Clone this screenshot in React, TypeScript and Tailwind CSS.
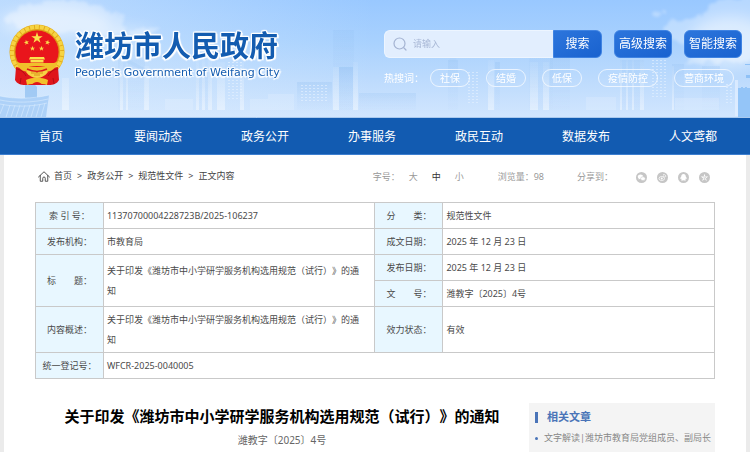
import * as React from 'react';

const NAV = ['首页', '要闻动态', '政务公开', '办事服务', '政民互动', '数据发布', '人文鸢都'];
const HOT_WORDS = ['社保', '结婚', '低保', '疫情防控', '营商环境'];
const CRUMBS = ['首页', '政务公开', '规范性文件', '正文内容'];
const TITLE = '关于印发《潍坊市中小学研学服务机构选用规范（试行）》的通知';

// x, top, width, opacity
const TOWERS: number[][] = [
    [118, 60, 27, 0.15], [196, 70, 14, 0.15], [333, 30, 21, 0.2], [339, 67, 14, 0.45],
    [297, 82, 35, 0.3], [359, 93, 57, 0.25], [448, 60, 10, 0.25], [495, 62, 5, 0.3],
    [529, 42, 24, 0.2], [550, 55, 20, 0.25], [620, 60, 24, 0.2], [672, 64, 12, 0.2], [702, 66, 18, 0.2],
];

// x, top, columns, rows
const WINDOWS: number[][] = [
    [228, 62, 4, 13], [301, 85, 7, 6], [468, 72, 3, 11], [652, 60, 4, 13], [726, 84, 2, 7],
];

const Skyline: React.FC = () => (
    <svg className="absolute inset-0 h-full w-full" viewBox="0 0 750 118" preserveAspectRatio="none" aria-hidden="true">
        <defs>
            <linearGradient id="sky" x1="0" y1="0" x2="0" y2="1">
                <stop offset="0" stopColor="#99c8ff" />
                <stop offset="0.35" stopColor="#a8d1fe" />
                <stop offset="0.65" stopColor="#bbdafd" />
                <stop offset="1" stopColor="#d2e6fe" />
            </linearGradient>
            <linearGradient id="haze" x1="0" y1="0" x2="1" y2="0">
                <stop offset="0" stopColor="#e0effe" stopOpacity="0.5" />
                <stop offset="0.5" stopColor="#e0effe" stopOpacity="0" />
            </linearGradient>
            <linearGradient id="tower" x1="0" y1="0" x2="0" y2="1">
                <stop offset="0" stopColor="#8fbdf0" stopOpacity="0.9" />
                <stop offset="1" stopColor="#b4d5fa" stopOpacity="0.2" />
            </linearGradient>
            <linearGradient id="beam" x1="0" y1="0" x2="0" y2="1">
                <stop offset="0" stopColor="#fff" stopOpacity="0.05" />
                <stop offset="1" stopColor="#fff" stopOpacity="0.4" />
            </linearGradient>
            <filter id="cloud" x="-20%" y="-30%" width="140%" height="160%">
                <feTurbulence type="fractalNoise" baseFrequency="0.09" numOctaves="4" seed="7" result="n" />
                <feDisplacementMap in="SourceGraphic" in2="n" scale="12" xChannelSelector="R" yChannelSelector="G" />
                <feGaussianBlur stdDeviation="1.4" />
            </filter>
            <filter id="soft" x="-30%" y="-50%" width="160%" height="200%">
                <feGaussianBlur stdDeviation="7" />
            </filter>
        </defs>
        <rect width="750" height="118" fill="url(#sky)" />
        <rect width="750" height="118" fill="url(#haze)" />
        <g fill="#fff" filter="url(#soft)">
            <ellipse cx="55" cy="22" rx="55" ry="16" opacity="0.4" />
            <ellipse cx="120" cy="34" rx="35" ry="8" opacity="0.3" />
            <ellipse cx="730" cy="42" rx="40" ry="26" opacity="0.45" />
        </g>
        <g fill="#fff" filter="url(#cloud)" opacity="0.3">
            <path d="M6 18c6-8 18-12 30-14 16-5 40-4 56 2 14 3 28 8 32 16 6 6 2 12-8 12-18 2-40-2-60-2-22-1-42-4-50-14z" />
            <path d="M125 34c10-4 24-6 34-9-4 6-12 12-24 13zM118 14l8 1-4 4z" />
            <path d="M664 32c2-8 12-10 20-13 8-2 18-2 24-9 6-8 14-12 26-12h24v62h-30c-16 2-30 6-44 3 2-8 12-10 22-14-16-4-32-6-42-17z" />
            <path d="M651 13l6-2 1 5-5 1zM661 8l4 2v5l-4-1z" />
        </g>
        {TOWERS.map(([x, y, w, o]) => (
            <rect key={x} x={x} y={y} width={w} height={110 - y} fill="url(#tower)" opacity={o} />
        ))}
        <g fill="url(#beam)">
            <path d="M62 78h7v32h-7zM120 60h3v50h-3zM126 60h2v50h-2zM144 66h5v44h-5zM196 58h3v52h-3zM202 58h3v52h-3zM208 58h4v52h-4zM217 62h8v48h-8zM240 62h4v48h-4z" />
            <path d="M333 67h6v43h-6zM353 62h5v48h-5zM488 60h6v50h-6zM530 62h8v48h-8zM543 62h6v48h-6zM620 60h2v50h-2zM626 60h2v50h-2zM632 60h2v50h-2zM640 60h4v50h-4zM672 66h2v44h-2z" />
        </g>
        <g fill="#fff" opacity="0.15">
            <path d="M165 99h28v11h-28zM250 99h20v11h-20zM268 94h26v16h-26zM586 97h30v13h-30zM675 98h44v12h-44z" />
        </g>
        <path d="M449 62l3-11h2l3 11zM117 58l5-2 26 14-4 1z" fill="#a9cdf5" opacity="0.35" />
        <g fill="#e7f2ff" opacity="0.6">
            {WINDOWS.map(([x, y, cols, rows]) =>
                Array.from({ length: cols * rows }, (_, i) => (
                    <rect key={`${x}-${i}`} x={x + (i % cols) * 4} y={y + Math.floor(i / cols) * 3} width="2" height="1" />
                ))
            )}
        </g>
        {/* stadium on the left edge */}
        <path d="M25 83h8l4 4v11H25z" fill="#8dbdef" opacity="0.7" />
        <path d="M0 96c14 3 32 3 49-1l-3 22H0z" fill="#9cc8f5" opacity="0.7" />
        <g stroke="#e3f1ff" strokeWidth="0.7" opacity="0.7" fill="none">
            <path d="M0 96c14 3 32 3 49-1M0 100c14 3 32 3 48-1M0 104c14 3 32 3 47-1" />
            <path d="M4 104l-4 10M10 105l-4 12M15 105l-4 12M20 105l-4 12M25 105l-4 12M30 105l-4 12M35 104l-4 13M40 104l-4 13M45 103l-4 14" />
        </g>
        <path d="M735 80h3v36h-3z" fill="#e4f0ff" opacity="0.7" />
        <path d="M738 88h3v-1h2v1h2v-1h2v1h3v29h-12z" fill="#94c5f8" />
        <path d="M745 64h5v1h-5zM746 75h4v3h-4z" fill="#8fc1f6" />
        <path d="M0 117.500h750" stroke="#a9c9ee" />
    </svg>
);

const STAR = 'M0-1 .225-.309.951-.309.363.118.588.809 0 .382-.588.809-.363.118-.951-.309-.225-.309z';

const Emblem: React.FC = () => (
    <svg className="h-[62px] w-14 shrink-0" viewBox="0 0 56 62" role="img" aria-label="国徽">
        <circle cx="28" cy="28" r="27.500" fill="#e3ab1c" />
        <circle cx="28" cy="28" r="25" fill="none" stroke="#f6d443" strokeWidth="4" strokeDasharray="4 1" />
        <circle cx="28" cy="28" r="22" fill="#e9151c" stroke="#d99a12" strokeWidth="0.800" />
        <g fill="#fbe04c">
            <path d={STAR} transform="translate(28 14) scale(6)" />
            <path d={STAR} transform="translate(17.500 18.500) rotate(-15) scale(2.800)" />
            <path d={STAR} transform="translate(38.500 18.500) rotate(15) scale(2.800)" />
            <path d={STAR} transform="translate(23.500 24.500) scale(2.800)" />
            <path d={STAR} transform="translate(32.500 24.500) scale(2.800)" />
            <path d="M21 33h14l1 2.500H20zM21.500 36h13v2.500h-13z" />
            <path d="M11 39h34v3H11z" fill="#f0c02c" />
        </g>
        <path d="M7 43c7 2 35 2 42 0l1 13c-2 4-6 5-10 5H16c-4 0-8-1-10-5z" fill="#df151b" />
        <path d="M8 38c5 1 9 5 20 5s15-4 20-5c0 6-6 10-12 10H20c-6 0-12-4-12-10z" fill="#f0bf2a" />
        <path d="M17 48c3-3 7-3 11 1 4-4 8-4 11-1-3 4-7 6-11 6s-8-2-11-6z" fill="#f7d245" />
        <path d="M18 45c6 3 14 3 20 0" stroke="#dd1a1a" strokeWidth="1.500" fill="none" />
        <path d="M22 49h12M25 51h6" stroke="#d8941a" fill="none" />
        <path d="M17 56c6-3 16-3 22 0l-1 5c-6-2-14-2-20 0z" fill="#f2c22b" />
        <path d="M23 61c2-4 8-4 10 0z" fill="#df151b" />
        <path d="M7 45c4 0 8 3 10 7M49 45c-4 0-8 3-10 7M12 54l-1 6M44 54l1 6" stroke="#b20e15" fill="none" />
    </svg>
);

const ShareButton: React.FC<{ label: string; children: React.ReactNode }> = ({ label, children }) => (
    <button type="button" aria-label={label} className="size-[11px]">
        <svg viewBox="0 0 22 22" className="block size-full">
            <circle cx="11" cy="11" r="11" fill="#c6c6c6" />
            {children}
        </svg>
    </button>
);

const Header: React.FC = () => (
    <header className="relative h-[118px]">
        <Skyline />
        <div className="relative flex items-start justify-between pl-[9px] pr-2">
            <a href="#" className="mt-6 flex gap-[10px]">
                <Emblem />
                <div className="text-[#135cb0] [text-shadow:1px_0_1px_#fff,-1px_0_1px_#fff,0_1px_1px_#fff,0_-1px_1px_#fff,2px_1px_1px_#fff,-1px_-1px_1px_#fff,1px_-1px_1px_#fff,-1px_2px_1px_#fff]">
                    <div className="pt-1 text-[29px] leading-9 font-bold whitespace-nowrap">潍坊市人民政府</div>
                    <div className="text-[11px] leading-[18px] whitespace-nowrap font-['DejaVu_Sans',sans-serif]">People's Government of Weifang City</div>
                </div>
            </a>
            <div className="mt-[30px] w-[358px]">
                <form className="flex gap-3" onSubmit={(e) => e.preventDefault()}>
                    <div className="flex h-7 flex-1">
                        <label className="flex min-w-0 flex-1 items-center gap-[6px] rounded-l-md border border-r-0 border-[#edf5ff] bg-[#e2eefe] pl-2">
                            <svg viewBox="0 0 14 14" className="size-[14px] shrink-0" fill="none" stroke="#a4b3d2" strokeWidth="1.200" strokeLinecap="round">
                                <circle cx="6.500" cy="6.500" r="5.500" />
                                <path d="M11 11l2 2" />
                            </svg>
                            <input type="text" aria-label="搜索" placeholder="请输入" className="w-full min-w-0 text-[9px] outline-none placeholder:text-[#a9b8d6]" />
                        </label>
                        <button type="submit" className="w-[49px] rounded-r-md border border-[#3f83e2] bg-linear-to-br from-[#2c75dc] to-[#1962cf] text-xs text-white">搜索</button>
                    </div>
                    {['高级搜索', '智能搜索'].map((text) => (
                        <button key={text} type="button" className="w-[58px] rounded-md border border-[#3f83e2] bg-linear-to-br from-[#2c75dc] to-[#1962cf] text-xs whitespace-nowrap text-white">{text}</button>
                    ))}
                </form>
                <div className="mt-[11px] flex items-center text-[10px] text-white">
                    <span className="mr-[6px]">热搜词：</span>
                    <div className="flex gap-4">
                        {HOT_WORDS.map((word) => (
                            <a key={word} href="#" className="flex h-[18px] items-center rounded-full border border-white/70 px-[9px]">{word}</a>
                        ))}
                    </div>
                </div>
            </div>
        </div>
    </header>
);

const Label: React.FC<{ rowSpan?: number; children: React.ReactNode }> = ({ rowSpan, children }) => (
    <th scope="row" rowSpan={rowSpan} className="border border-[#c9c9c9] bg-[#e8f7ff] text-center font-normal whitespace-pre">{children}</th>
);

const Value: React.FC<{ rowSpan?: number; colSpan?: number; children: React.ReactNode }> = ({ rowSpan, colSpan, children }) => (
    <td rowSpan={rowSpan} colSpan={colSpan} className="border border-[#c9c9c9] pr-3 pl-[3px]">{children}</td>
);

const InfoTable: React.FC = () => (
    <table className="w-full table-fixed border-collapse text-[9px] leading-5 text-[#4a4a4a]">
        <colgroup>
            <col className="w-[10%]" />
            <col className="w-[40%]" />
            <col className="w-[10%]" />
            <col className="w-[40%]" />
        </colgroup>
        <tbody>
            <tr className="h-[26px]">
                <Label>索 引 号：</Label>
                <Value>11370700004228723B/2025-106237</Value>
                <Label>分　　类：</Label>
                <Value>规范性文件</Value>
            </tr>
            <tr className="h-[26px]">
                <Label>发布机构：</Label>
                <Value>市教育局</Value>
                <Label>成文日期：</Label>
                <Value>2025 年 12 月 23 日</Value>
            </tr>
            <tr className="h-[26px]">
                <Label rowSpan={2}>标　　题：</Label>
                <Value rowSpan={2}>{TITLE}</Value>
                <Label>发布日期：</Label>
                <Value>2025 年 12 月 23 日</Value>
            </tr>
            <tr className="h-[26px]">
                <Label>文　　号：</Label>
                <Value>潍教字〔2025〕4号</Value>
            </tr>
            <tr className="h-[46px]">
                <Label>内容概述：</Label>
                <Value>{TITLE}</Value>
                <Label>效力状态：</Label>
                <Value>有效</Value>
            </tr>
            <tr className="h-[26px]">
                <Label>统一登记号：</Label>
                <Value colSpan={3}>WFCR-2025-0040005</Value>
            </tr>
        </tbody>
    </table>
);

const App: React.FC = () => (
    <div className="flex min-h-screen flex-col bg-[#ebebeb] font-['Noto_Sans','Noto_Sans_CJK_SC',sans-serif] [text-spacing-trim:space-all]">
        <Header />
        <nav className="flex h-[37px] items-center justify-between border-b border-[#3d7fd0] bg-[#125bb1] pt-[2px] pr-[33px] pl-[27px] text-xs text-white">
            {NAV.map((item) => (
                <a key={item} href="#" className="w-12 text-center whitespace-nowrap">{item}</a>
            ))}
        </nav>
        <main className="mx-1 flex flex-1 flex-col bg-white px-[31px]">
            <div className="flex h-[47px] items-start justify-between pt-[13px] text-[9px] leading-4">
                <div className="flex items-center pl-[3px] text-[#444]">
                    <svg viewBox="0 0 24 22" className="mr-1 h-[11px] w-3" fill="none" stroke="#444" strokeWidth="1.800" strokeLinejoin="round" strokeLinecap="round">
                        <path d="M1 12L12 1.500 23 12M4.500 9v11.500H9.500V14.500a2.500 2.500 0 0 1 5 0v6h5V9" />
                    </svg>
                    {CRUMBS.map((crumb, i) => (
                        <React.Fragment key={crumb}>
                            {i > 0 && <span className="mx-[5px]">&gt;</span>}
                            <a href="#">{crumb}</a>
                        </React.Fragment>
                    ))}
                </div>
                <div className="flex items-center pt-px pr-[5px] text-[#999]">
                    <span className="mr-[9px]">字号：</span>
                    <div className="mr-[34px] flex gap-[14px]">
                        <button type="button">大</button>
                        <button type="button" className="text-[#333]">中</button>
                        <button type="button">小</button>
                    </div>
                    <span className="mr-[33px]">浏览量：98</span>
                    <span className="mr-[23px]">分享到：</span>
                    <div className="flex gap-[10px]">
                        <ShareButton label="微信">
                            <g fill="#fff">
                                <path d="M9 5c-3.300 0-5.500 2-5.500 4.500 0 1.500.8 2.700 2 3.500L5 15l2.300-1.200 1.700.2c3 0 5.500-2 5.500-4.500S12 5 9 5z" />
                                <path d="M14 9.500c-2.800 0-4.800 1.700-4.800 3.800s2 3.700 4.800 3.700l1.400-.2 2 1-.5-1.700c1-.7 1.700-1.700 1.700-2.800 0-2.100-2-3.800-4.600-3.800z" stroke="#c6c6c6" strokeWidth="1.200" />
                            </g>
                        </ShareButton>
                        <ShareButton label="微博">
                            <ellipse cx="9.500" cy="13" rx="5.500" ry="4" fill="none" stroke="#fff" strokeWidth="1.500" />
                            <circle cx="9.500" cy="13" r="2" fill="#fff" />
                            <path d="M13 5c3-.5 5 1.500 4.500 4.500M12.500 8c1.500-.3 2.300.5 2 2" fill="none" stroke="#fff" strokeWidth="1.400" strokeLinecap="round" />
                        </ShareButton>
                        <ShareButton label="QQ">
                            <path d="M11 4c-3 0-4.500 2.200-4.500 4.800-1 1.500-2.500 3.200-2 5.200l2-1 .5 2.500-1 1c1 1 3.500.8 5 0 1.500.8 4 1 5 0l-1-1 .5-2.500 2 1c.5-2-1-3.700-2-5.200C15.500 6.200 14 4 11 4z" fill="#fff" />
                        </ShareButton>
                        <ShareButton label="QQ空间">
                            <path d={STAR} transform="translate(11 11.500) scale(8)" fill="#fff" />
                            <path d="M8.500 10h5l-4 4h4" fill="none" stroke="#c6c6c6" strokeWidth="1.400" />
                        </ShareButton>
                    </div>
                </div>
            </div>
            <InfoTable />
            <div className="flex flex-1">
                <article className="flex-1 pt-[25px] text-center">
                    <h1 className="text-[15px] leading-6 font-bold whitespace-nowrap text-black">{TITLE}</h1>
                    <p className="mt-1 text-[10px] leading-4 text-[#666]">潍教字〔2025〕4号</p>
                </article>
                <aside className="mt-6 w-[186px] bg-[#f4f4f4] px-[6px] pt-[5px]">
                    <h2 className="flex items-center gap-[9px] text-[11px] leading-[18px] font-bold text-[#4a74b8]">
                        <span className="h-[11px] w-[3px] bg-[#4a74b8]" />
                        相关文章
                    </h2>
                    <ul className="mt-1 text-[9px] leading-4 text-[#888]">
                        <li className="flex items-center gap-[6px]">
                            <span className="size-[3px] shrink-0 rounded-full bg-[#4a74b8]" />
                            <a href="#" className="whitespace-nowrap">文字解读|潍坊市教育局党组成员、副局长</a>
                        </li>
                    </ul>
                </aside>
            </div>
        </main>
    </div>
);

export default App;
